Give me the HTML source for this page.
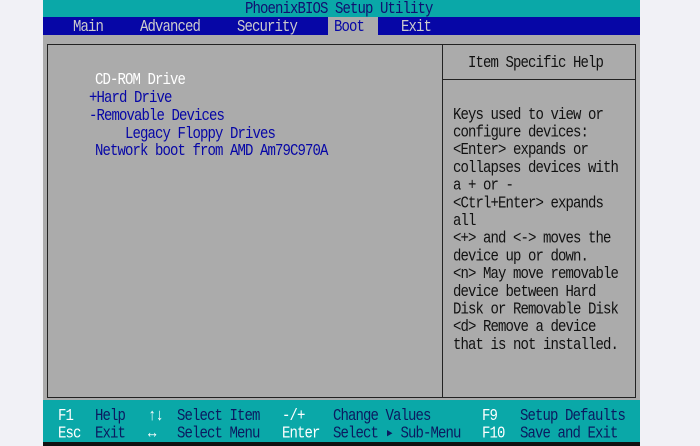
<!DOCTYPE html><html><head><style>
body{margin:0;width:700px;height:446px;background:#f1f1f6;position:relative;overflow:hidden;font-family:"Liberation Mono",monospace;font-size:14px;letter-spacing:-0.9px}
.a{position:absolute;white-space:pre;line-height:17px}
.t{transform:scaleY(1.18);transform-origin:0 0}
#bios{position:absolute;left:43px;top:0;width:597px;height:446px;background:#ababab}
</style></head><body>
<div id="bios"></div>
<div class="a" style="left:43px;top:0;width:597px;height:17px;background:#0aa8a8"></div>
<div class="a" style="left:43px;top:17px;width:597px;height:18px;background:#0606a6"></div>
<div class="a" style="left:328px;top:17px;width:50px;height:18px;background:#ababab"></div>
<div class="a" style="left:47px;top:44px;width:587px;height:352px;border:1px solid #222"></div>
<div class="a" style="left:442px;top:44px;width:0;height:353px;border-left:1px solid #222"></div>
<div class="a" style="left:442px;top:79px;width:193px;height:0;border-top:1px solid #222"></div>
<div class="a" style="left:43px;top:400px;width:597px;height:42px;background:#0aa8a8"></div>
<div class="a" style="left:43px;top:442px;width:597px;height:4px;background:#111"></div>
<div class="a t" style="left:245px;top:0px;color:#101070">PhoenixBIOS Setup Utility</div>
<div class="a t" style="top:18px;left:73px;color:#ccc">Main</div>
<div class="a t" style="top:18px;left:140px;color:#ccc">Advanced</div>
<div class="a t" style="top:18px;left:237px;color:#ccc">Security</div>
<div class="a t" style="top:18px;left:334px;color:#0606a6">Boot</div>
<div class="a t" style="top:18px;left:401px;color:#ccc">Exit</div>
<div class="a t" style="top:71px;left:95px;color:#fff">CD-ROM Drive</div>
<div class="a t" style="top:89px;left:89px;color:#0606a6">+Hard Drive</div>
<div class="a t" style="top:107px;left:89px;color:#0606a6">-Removable Devices</div>
<div class="a t" style="top:125px;left:125px;color:#0606a6">Legacy Floppy Drives</div>
<div class="a t" style="top:142px;left:95px;color:#0606a6">Network boot from AMD Am79C970A</div>
<div class="a t" style="top:54px;left:468px;color:#111">Item Specific Help</div>
<div class="a t" style="top:107px;left:453px;color:#111;line-height:15px">Keys used to view or
configure devices:
&lt;Enter&gt; expands or
collapses devices with
a + or -
&lt;Ctrl+Enter&gt; expands
all
&lt;+&gt; and &lt;-&gt; moves the
device up or down.
&lt;n&gt; May move removable
device between Hard
Disk or Removable Disk
&lt;d&gt; Remove a device
that is not installed.</div>
<div class="a t" style="top:408px;left:58px;color:#fff;line-height:14.6px">F1
Esc</div>
<div class="a t" style="top:408px;left:95px;color:#0b1a60;line-height:14.6px">Help
Exit</div>
<div class="a t" style="top:408px;left:148px;color:#fff;line-height:14.6px">↑↓
↔</div>
<div class="a t" style="top:408px;left:177px;color:#0b1a60;line-height:14.6px">Select Item
Select Menu</div>
<div class="a t" style="top:408px;left:282px;color:#fff;line-height:14.6px">-/+
Enter</div>
<div class="a t" style="top:408px;left:333px;color:#0b1a60;line-height:14.6px">Change Values
Select ▸ Sub-Menu</div>
<div class="a t" style="top:408px;left:482px;color:#fff;line-height:14.6px">F9
F10</div>
<div class="a t" style="top:408px;left:520px;color:#0b1a60;line-height:14.6px">Setup Defaults
Save and Exit</div>
</body></html>
